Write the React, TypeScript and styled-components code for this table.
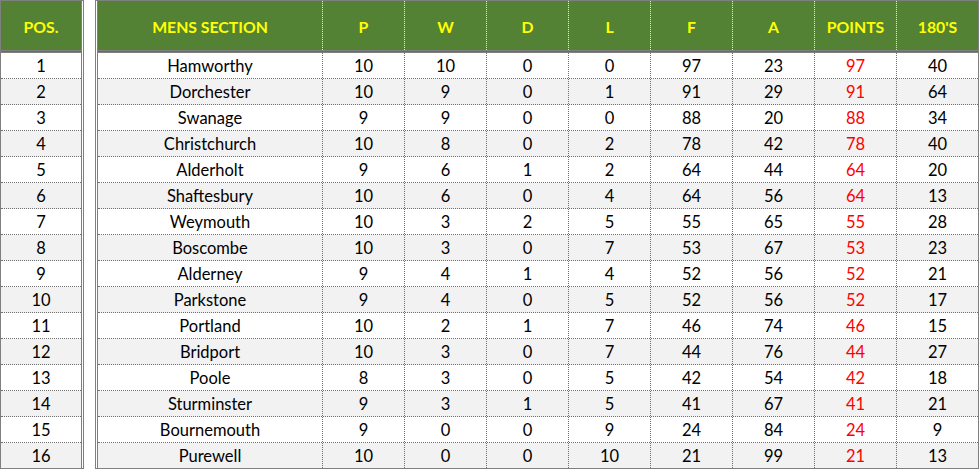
import React from "react";
import styled, { createGlobalStyle } from "styled-components";

const Global = createGlobalStyle`
  html, body { margin: 0; padding: 0; background: #ffffff; }
  body { font-family: Lato, "Open Sans", sans-serif; }
`;

type Team = {
  name: string;
  p: number;
  w: number;
  d: number;
  l: number;
  f: number;
  a: number;
  pts: number;
  s180: number;
};

const teams: Team[] = [
  { name: "Hamworthy", p: 10, w: 10, d: 0, l: 0, f: 97, a: 23, pts: 97, s180: 40 },
  { name: "Dorchester", p: 10, w: 9, d: 0, l: 1, f: 91, a: 29, pts: 91, s180: 64 },
  { name: "Swanage", p: 9, w: 9, d: 0, l: 0, f: 88, a: 20, pts: 88, s180: 34 },
  { name: "Christchurch", p: 10, w: 8, d: 0, l: 2, f: 78, a: 42, pts: 78, s180: 40 },
  { name: "Alderholt", p: 9, w: 6, d: 1, l: 2, f: 64, a: 44, pts: 64, s180: 20 },
  { name: "Shaftesbury", p: 10, w: 6, d: 0, l: 4, f: 64, a: 56, pts: 64, s180: 13 },
  { name: "Weymouth", p: 10, w: 3, d: 2, l: 5, f: 55, a: 65, pts: 55, s180: 28 },
  { name: "Boscombe", p: 10, w: 3, d: 0, l: 7, f: 53, a: 67, pts: 53, s180: 23 },
  { name: "Alderney", p: 9, w: 4, d: 1, l: 4, f: 52, a: 56, pts: 52, s180: 21 },
  { name: "Parkstone", p: 9, w: 4, d: 0, l: 5, f: 52, a: 56, pts: 52, s180: 17 },
  { name: "Portland", p: 10, w: 2, d: 1, l: 7, f: 46, a: 74, pts: 46, s180: 15 },
  { name: "Bridport", p: 10, w: 3, d: 0, l: 7, f: 44, a: 76, pts: 44, s180: 27 },
  { name: "Poole", p: 8, w: 3, d: 0, l: 5, f: 42, a: 54, pts: 42, s180: 18 },
  { name: "Sturminster", p: 9, w: 3, d: 1, l: 5, f: 41, a: 67, pts: 41, s180: 21 },
  { name: "Bournemouth", p: 9, w: 0, d: 0, l: 9, f: 24, a: 84, pts: 24, s180: 9 },
  { name: "Purewell", p: 10, w: 0, d: 0, l: 10, f: 21, a: 99, pts: 21, s180: 13 },
];

const Page = styled.div`
  display: flex;
  gap: 11px;
  width: 979px;
  height: 469px;
  box-sizing: border-box;
`;

const PosTable = styled.div`
  width: 84px;
  box-sizing: border-box;
  border-top: 1px solid #7f7f7f;
  border-left: 1px solid #7f7f7f;
  border-bottom: 1px solid #7f7f7f;
  border-right: 3px double #7f7f7f;
  display: flex;
  flex-direction: column;
`;

const MainTable = styled.div`
  width: 884px;
  box-sizing: border-box;
  border-top: 1px solid #7f7f7f;
  border-left: 3px double #7f7f7f;
  border-bottom: 1px solid #7f7f7f;
  border-right: 1px solid #7f7f7f;
  display: flex;
  flex-direction: column;
`;

const Row = styled.div<{ $cols: string; $shade?: boolean; $last?: boolean }>`
  display: grid;
  grid-template-columns: ${(p) => p.$cols};
  height: ${(p) => (p.$last ? "25px" : "26px")};
  box-sizing: border-box;
  background: ${(p) => (p.$shade ? "#f2f2f2" : "#ffffff")};
  border-bottom: ${(p) => (p.$last ? "none" : "1px dotted #6f6f6f")};
`;

const HeadRow = styled.div<{ $cols: string }>`
  display: grid;
  grid-template-columns: ${(p) => p.$cols};
  height: 52px;
  box-sizing: border-box;
  background: #548235;
  border-bottom: 3px double #7f7f7f;
`;

const HeadCell = styled.div<{ $divider?: boolean }>`
  display: flex;
  align-items: center;
  justify-content: center;
  color: #ffff00;
  font-weight: 700;
  font-size: 15.8px;
  padding-top: 1px;
  box-sizing: border-box;
  border-left: ${(p) => (p.$divider ? "1px dotted #e8e8e8" : "none")};
`;

const Cell = styled.div<{ $divider?: boolean; $red?: boolean }>`
  display: flex;
  align-items: center;
  justify-content: center;
  font-size: 16.5px;
  color: ${(p) => (p.$red ? "#ff0000" : "#000000")};
  box-sizing: border-box;
  padding-top: 1px;
  border-left: ${(p) => (p.$divider ? "1px dotted #6f6f6f" : "none")};
`;

const POS_COLS = "80px";
const MAIN_COLS = "224px repeat(8, 82px)";

const headers = ["P", "W", "D", "L", "F", "A", "POINTS", "180'S"];

export default function App() {
  return (
    <>
      <Global />
      <Page>
        <PosTable>
          <HeadRow $cols={POS_COLS}>
            <HeadCell>POS.</HeadCell>
          </HeadRow>
          {teams.map((_, i) => (
            <Row key={i} $cols={POS_COLS} $shade={i % 2 === 1} $last={i === teams.length - 1}>
              <Cell>{i + 1}</Cell>
            </Row>
          ))}
        </PosTable>
        <MainTable>
          <HeadRow $cols={MAIN_COLS}>
            <HeadCell>MENS SECTION</HeadCell>
            {headers.map((h) => (
              <HeadCell key={h} $divider>
                {h}
              </HeadCell>
            ))}
          </HeadRow>
          {teams.map((t, i) => (
            <Row key={t.name} $cols={MAIN_COLS} $shade={i % 2 === 1} $last={i === teams.length - 1}>
              <Cell>{t.name}</Cell>
              <Cell $divider>{t.p}</Cell>
              <Cell $divider>{t.w}</Cell>
              <Cell $divider>{t.d}</Cell>
              <Cell $divider>{t.l}</Cell>
              <Cell $divider>{t.f}</Cell>
              <Cell $divider>{t.a}</Cell>
              <Cell $divider $red>
                {t.pts}
              </Cell>
              <Cell $divider>{t.s180}</Cell>
            </Row>
          ))}
        </MainTable>
      </Page>
    </>
  );
}
